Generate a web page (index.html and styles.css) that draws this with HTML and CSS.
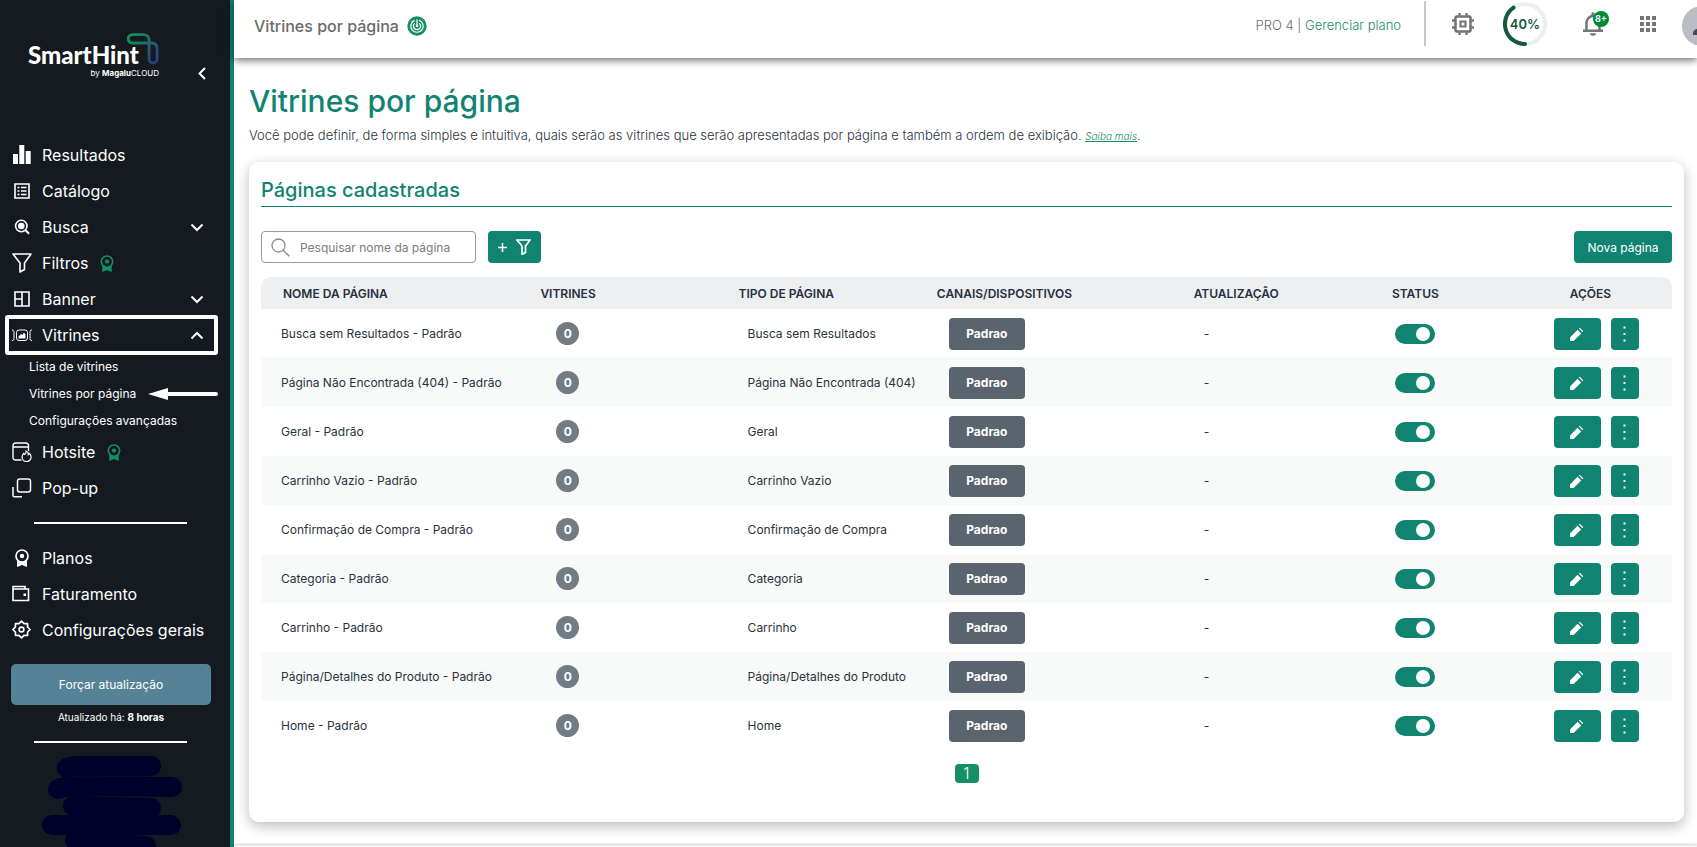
FILE: index.html
```html
<!DOCTYPE html>
<html lang="pt-BR">
<head>
<meta charset="utf-8">
<meta name="viewport" content="width=device-width, initial-scale=1">
<title>Vitrines por página</title>
<link rel="stylesheet" href="styles.css">
</head>
<body>
<svg class="sprite" aria-hidden="true">
  <symbol id="i-down" viewBox="0 0 14 9"><path d="M1.500 1.500 7 7l5.500-5.500" fill="none" stroke="currentColor" stroke-width="2"/></symbol>
  <symbol id="i-award" viewBox="0 0 14 18"><path d="M2 10v8l5-2 5 2v-8z" fill="currentColor"/><circle cx="7" cy="7" r="6" fill="#141a20" stroke="currentColor" stroke-width="1.700"/><circle cx="7" cy="7" r="2.200" fill="currentColor"/></symbol>
  <symbol id="i-funnel" viewBox="0 0 20 20"><path d="M1 1h18l-6.500 9v6.500L8 19v-9z" fill="none" stroke="currentColor" stroke-width="1.600" stroke-linejoin="round"/></symbol>
  <symbol id="i-pencil" viewBox="0 0 14 14"><path d="M0 14v-3.600l7.600-7.600 3.600 3.600L3.600 14zM8.800 1.600l.9-.9L13.300 4.300l-.9.9z" fill="currentColor"/></symbol>
  <symbol id="i-dots" viewBox="0 0 3 16"><path d="M.5 .5h2v2H.5zM.5 7h2v2H.5zM.5 13.500h2v2H.5z" fill="currentColor"/></symbol>
</svg>

<div class="app">
  <aside class="sidebar">
    <div class="brand">
      <div class="logo">
        <div class="logo-name">SmartHint</div>
        <div class="logo-by">by <b>Magalu</b>CLOUD</div>
        <svg class="logo-mark" viewBox="0 0 32 33" aria-hidden="true">
          <defs><linearGradient id="mark" x1="0" y1="0" x2="1" y2="1"><stop offset="0" stop-color="#12955e"/><stop offset=".45" stop-color="#1d6f68"/><stop offset="1" stop-color="#2b3a86"/></linearGradient></defs>
          <path d="M20 10H5.500a4.200 4.200 0 0 1 0-8.400h11c3.200 0 5.600 2 5.600 5v19.300a4 4 0 0 0 8 0V15.500c0-3.500-2.300-5.500-5.600-5.500z" fill="none" stroke="url(#mark)" stroke-width="2.800"/>
        </svg>
      </div>
      <button class="collapse" aria-label="Recolher menu"><svg width="8" height="13" viewBox="0 0 8 13"><path d="M7 1 1.500 6.500 7 12" fill="none" stroke="currentColor" stroke-width="2"/></svg></button>
    </div>

    <nav class="menu">
      <a href="#" class="item"><svg class="ico" viewBox="0 0 20 20"><path d="M1 9h5v10H1zM7.300 0h5v19h-5zM13.700 6h5v13h-5z" fill="currentColor"/></svg><span>Resultados</span></a>
      <a href="#" class="item"><svg class="ico" viewBox="0 0 20 20"><path d="M3 3h14v14H3z" fill="none" stroke="currentColor" stroke-width="1.600"/><path d="M5.500 6.500h2M9 6.500h5.500M5.500 10h2M9 10h5.500M5.500 13.500h2M9 13.500h5.500" stroke="currentColor" stroke-width="1.500"/></svg><span>Catálogo</span></a>
      <a href="#" class="item"><svg class="ico" viewBox="0 0 20 20"><circle cx="9.300" cy="9" r="5.700" fill="none" stroke="currentColor" stroke-width="1.600"/><circle cx="9.300" cy="9" r="3.300" fill="currentColor"/><path d="m13.500 13.200 3.600 3.600" stroke="currentColor" stroke-width="2"/></svg><span>Busca</span><svg class="chev"><use href="#i-down"/></svg></a>
      <a href="#" class="item"><svg class="ico"><use href="#i-funnel"/></svg><span>Filtros</span><svg class="award"><use href="#i-award"/></svg></a>
      <a href="#" class="item"><svg class="ico" viewBox="0 0 20 20"><path d="M3 3h14v14H3zM10 3v14M3 10h7" fill="none" stroke="currentColor" stroke-width="1.600"/></svg><span>Banner</span><svg class="chev"><use href="#i-down"/></svg></a>
      <a href="#" class="item current"><svg class="ico" viewBox="0 0 20 20"><path d="M0 5c1.500 0 2 .6 2 2v6.500c0 1.400-.5 2-2 2M20 5c-1.500 0-2 .6-2 2v6.500c0 1.400.5 2 2 2" fill="none" stroke="currentColor" stroke-width="1"/><rect x="4.500" y="5" width="11" height="10.500" rx="2.500" fill="none" stroke="currentColor"/><path d="M6.500 13.500v-2L9 9l1.500 1L12 7.500l1.500 2v4z" fill="currentColor"/></svg><span>Vitrines</span><svg class="chev up"><use href="#i-down"/></svg></a>
      <div class="sub">
        <a href="#">Lista de vitrines</a>
        <a href="#" class="pointed">Vitrines por página <svg width="70" height="12" viewBox="0 0 70 12" aria-hidden="true"><path d="M0 6 20 0v12z" fill="#fff"/><path d="M18 6h50" stroke="#fff" stroke-width="4" stroke-linecap="round"/></svg></a>
        <a href="#">Configurações avançadas</a>
      </div>
      <a href="#" class="item"><svg class="ico" viewBox="0 0 20 20"><path d="M9.500 18h-6A2.500 2.500 0 0 1 1 15.500v-12A2.500 2.500 0 0 1 3.500 1h10.500A2.500 2.500 0 0 1 16.500 3.500V9M1 5h15.500" fill="none" stroke="currentColor" stroke-width="1.400"/><path d="M14 9c.3 2-.6 3.200-1.600 3.400-.4-.3-.6-.6-.7-1-1 1-1.600 2.300-1.600 3.700a4.500 4.500 0 0 0 9 0c0-2.300-1.200-3.100-2-3.800-.3 1-.6 1.200-.8 1.300.2-1.600-.6-2.900-2.300-3.600z" fill="none" stroke="currentColor" stroke-width="1.200"/></svg><span>Hotsite</span><svg class="award"><use href="#i-award"/></svg></a>
      <a href="#" class="item"><svg class="ico" viewBox="0 0 20 20"><rect x="5.500" y="1" width="13" height="13" rx="2.200" fill="none" stroke="currentColor" stroke-width="1.500"/><path d="M1 9v8.500c0 .8.500 1.300 1.300 1.300H10" fill="none" stroke="currentColor" stroke-width="1.500"/></svg><span>Pop-up</span></a>
    </nav>
    <hr class="rule">
    <nav class="menu second">
      <a href="#" class="item"><svg class="ico plan"><use href="#i-award"/></svg><span>Planos</span></a>
      <a href="#" class="item"><svg class="ico" viewBox="0 0 20 20"><path d="M1 5h15.500v11.500H1zM1 5V2.500h12V5" fill="none" stroke="currentColor" stroke-width="1.600"/><path d="M11.500 9.500h2.500V12h-2.500z" fill="currentColor"/></svg><span>Faturamento</span></a>
      <a href="#" class="item"><svg class="ico" viewBox="0 0 20 20"><path d="M9.500 1.200 12 3.600l3.500-.1.100 3.500 2.500 2.500-2.500 2.500-.1 3.500-3.500-.1-2.500 2.500L7 15.400l-3.500.1L3.400 12 .9 9.500 3.400 7l.1-3.500 3.500.1z" fill="none" stroke="currentColor" stroke-width="1.700" stroke-linejoin="round"/><circle cx="9.500" cy="9.500" r="2.400" fill="none" stroke="currentColor" stroke-width="1.600"/></svg><span>Configurações gerais</span></a>
    </nav>
    <button class="force">Forçar atualização</button>
    <p class="updated">Atualizado há: <b>8 horas</b></p>
    <hr class="rule">
    <svg class="redacted" viewBox="0 0 230 100" aria-hidden="true"><g fill="none" stroke="#00002b" stroke-width="20" stroke-linecap="round"><path d="M67 20 75 18 151 18"/><path d="M58 41C66 37 90 38 172 39"/><path d="M73 58 151 60"/><path d="M52 77H171"/><path d="M75 92 146 98"/></g></svg>
  </aside>

  <div class="content">
    <header class="topbar">
      <span class="crumb">Vitrines por página</span>
      <svg class="radar" viewBox="0 0 20 20" aria-hidden="true"><circle cx="10" cy="10" r="9.700" fill="#158f63"/><path d="M10 3.500v6.500M12 4.200a6.200 6.200 0 1 1-4.500.2M12.200 7.200a3.600 3.600 0 1 1-4.400 0" fill="none" stroke="#fff" stroke-width="1.200"/><circle cx="10" cy="10" r="1.300" fill="#fff"/></svg>
      <div class="plan-info">PRO 4 | <a href="#">Gerenciar plano</a></div>
      <button class="tool chip" aria-label="Processamento"><svg width="24" height="24" viewBox="0 0 24 24"><path d="M5.500 4.500h13l1 1v13l-1 1h-13l-1-1v-13z" fill="none" stroke="currentColor" stroke-width="2.600"/><path d="M8.500 1v4M15.500 1v4M8.500 19v4M15.500 19v4M1 8.500h4M1 15.500h4M19 8.500h4M19 15.500h4" stroke="currentColor" stroke-width="2.400"/><path d="M9.500 9.500h5v5h-5z" fill="none" stroke="currentColor" stroke-width="2.200"/></svg></button>
      <div class="ring"><svg width="44" height="44" viewBox="0 0 44 44" aria-hidden="true"><circle cx="22" cy="22" r="20" fill="none" stroke="#e8f0ee" stroke-width="4"/><path d="M22 42A20 20 0 0 1 10.500 5.600" fill="none" stroke="#15593f" stroke-width="4" stroke-linecap="round"/></svg><span>40%</span></div>
      <button class="tool bell" aria-label="Notificações"><svg width="22" height="25" viewBox="0 0 22 25"><path d="M4.500 19.500V12a6.500 7 0 0 1 13 0v7.500" fill="none" stroke="currentColor" stroke-width="2.500"/><path d="M1 18.500h20V21H1zM8 22.300h6a3 2.500 0 0 1-6 0zM9.300 5V3a1.700 1.700 0 0 1 3.400 0v2z" fill="currentColor"/></svg><span class="count">8+</span></button>
      <button class="tool apps" aria-label="Aplicativos"><svg width="18" height="18" viewBox="0 0 18 18"><path d="M1 1h4v4H1zM7 1h4v4H7zM13 1h4v4h-4zM1 7h4v4H1zM7 7h4v4H7zM13 7h4v4h-4zM1 13h4v4H1zM7 13h4v4H7zM13 13h4v4h-4z" fill="currentColor"/></svg></button>
      <button class="avatar" aria-label="Conta"><svg width="40" height="40" viewBox="0 0 40 40"><circle cx="20" cy="20" r="20" fill="#b9bec6"/><circle cx="20" cy="14" r="5" fill="#474c52"/><path d="M11 29v-2c0-3.500 5-5 9-5s9 1.500 9 5v2z" fill="#474c52"/></svg></button>
    </header>

    <main class="page">
      <h1>Vitrines por página</h1>
      <p class="lead">Você pode definir, de forma simples e intuitiva, quais serão as vitrines que serão apresentadas por página e também a ordem de exibição. <a href="#">Saiba mais</a>.</p>

      <section class="card">
        <h2>Páginas cadastradas</h2>
        <div class="bar">
          <label class="search"><svg width="19" height="19" viewBox="0 0 19 19" aria-hidden="true"><circle cx="7.500" cy="7.500" r="6.500" fill="none" stroke="currentColor" stroke-width="1.300"/><path d="m12.200 12.200 6 6" stroke="currentColor" stroke-width="1.500"/></svg><input type="text" placeholder="Pesquisar nome da página" aria-label="Pesquisar nome da página"></label>
          <button class="btn filter" aria-label="Adicionar filtro"><svg width="9" height="9" viewBox="0 0 9 9"><path d="M4.500 0v9M0 4.500h9" stroke="currentColor" stroke-width="1.600"/></svg><svg width="15" height="16" viewBox="0 0 15 16"><path d="M1 1h13L9.500 7v6.500l-3.500 2V7z" fill="none" stroke="currentColor" stroke-width="1.700"/></svg></button>
          <button class="btn new">Nova página</button>
        </div>

        <table>
          <colgroup><col class="c-name"><col class="c-count"><col class="c-type"><col class="c-channel"><col class="c-date"><col class="c-status"><col class="c-actions"></colgroup>
          <thead><tr><th>NOME DA PÁGINA</th><th>VITRINES</th><th>TIPO DE PÁGINA</th><th>CANAIS/DISPOSITIVOS</th><th>ATUALIZAÇÃO</th><th>STATUS</th><th>AÇÕES</th></tr></thead>
          <tbody>
            <tr><td>Busca sem Resultados - Padrão</td><td><span class="num">0</span></td><td>Busca sem Resultados</td><td><button class="channel">Padrao</button></td><td>-</td><td><input type="checkbox" class="switch" aria-label="Status" checked></td><td><div class="acts"><button class="btn edit" aria-label="Editar"><svg><use href="#i-pencil"/></svg></button><button class="btn more" aria-label="Mais"><svg><use href="#i-dots"/></svg></button></div></td></tr>
            <tr><td>Página Não Encontrada (404) - Padrão</td><td><span class="num">0</span></td><td>Página Não Encontrada (404)</td><td><button class="channel">Padrao</button></td><td>-</td><td><input type="checkbox" class="switch" aria-label="Status" checked></td><td><div class="acts"><button class="btn edit" aria-label="Editar"><svg><use href="#i-pencil"/></svg></button><button class="btn more" aria-label="Mais"><svg><use href="#i-dots"/></svg></button></div></td></tr>
            <tr><td>Geral - Padrão</td><td><span class="num">0</span></td><td>Geral</td><td><button class="channel">Padrao</button></td><td>-</td><td><input type="checkbox" class="switch" aria-label="Status" checked></td><td><div class="acts"><button class="btn edit" aria-label="Editar"><svg><use href="#i-pencil"/></svg></button><button class="btn more" aria-label="Mais"><svg><use href="#i-dots"/></svg></button></div></td></tr>
            <tr><td>Carrinho Vazio - Padrão</td><td><span class="num">0</span></td><td>Carrinho Vazio</td><td><button class="channel">Padrao</button></td><td>-</td><td><input type="checkbox" class="switch" aria-label="Status" checked></td><td><div class="acts"><button class="btn edit" aria-label="Editar"><svg><use href="#i-pencil"/></svg></button><button class="btn more" aria-label="Mais"><svg><use href="#i-dots"/></svg></button></div></td></tr>
            <tr><td>Confirmação de Compra - Padrão</td><td><span class="num">0</span></td><td>Confirmação de Compra</td><td><button class="channel">Padrao</button></td><td>-</td><td><input type="checkbox" class="switch" aria-label="Status" checked></td><td><div class="acts"><button class="btn edit" aria-label="Editar"><svg><use href="#i-pencil"/></svg></button><button class="btn more" aria-label="Mais"><svg><use href="#i-dots"/></svg></button></div></td></tr>
            <tr><td>Categoria - Padrão</td><td><span class="num">0</span></td><td>Categoria</td><td><button class="channel">Padrao</button></td><td>-</td><td><input type="checkbox" class="switch" aria-label="Status" checked></td><td><div class="acts"><button class="btn edit" aria-label="Editar"><svg><use href="#i-pencil"/></svg></button><button class="btn more" aria-label="Mais"><svg><use href="#i-dots"/></svg></button></div></td></tr>
            <tr><td>Carrinho - Padrão</td><td><span class="num">0</span></td><td>Carrinho</td><td><button class="channel">Padrao</button></td><td>-</td><td><input type="checkbox" class="switch" aria-label="Status" checked></td><td><div class="acts"><button class="btn edit" aria-label="Editar"><svg><use href="#i-pencil"/></svg></button><button class="btn more" aria-label="Mais"><svg><use href="#i-dots"/></svg></button></div></td></tr>
            <tr><td>Página/Detalhes do Produto - Padrão</td><td><span class="num">0</span></td><td>Página/Detalhes do Produto</td><td><button class="channel">Padrao</button></td><td>-</td><td><input type="checkbox" class="switch" aria-label="Status" checked></td><td><div class="acts"><button class="btn edit" aria-label="Editar"><svg><use href="#i-pencil"/></svg></button><button class="btn more" aria-label="Mais"><svg><use href="#i-dots"/></svg></button></div></td></tr>
            <tr><td>Home - Padrão</td><td><span class="num">0</span></td><td>Home</td><td><button class="channel">Padrao</button></td><td>-</td><td><input type="checkbox" class="switch" aria-label="Status" checked></td><td><div class="acts"><button class="btn edit" aria-label="Editar"><svg><use href="#i-pencil"/></svg></button><button class="btn more" aria-label="Mais"><svg><use href="#i-dots"/></svg></button></div></td></tr>
          </tbody>
        </table>
        <div class="pager"><button class="page-no">1</button></div>
      </section>
    </main>
    <footer class="footer"></footer>
  </div>
</div>
</body>
</html>
```
FILE: styles.css
```css
* { box-sizing: border-box; }
body { margin: 0; font-family: Inter, "Open Sans", sans-serif; font-size: 13px; color: #2a323c; background: #fff; }
button, input { font: inherit; }
button { border: 0; padding: 0; cursor: pointer; background: none; color: inherit; }
a { color: inherit; text-decoration: none; }
svg { display: block; flex: none; }
.sprite { display: none; }

.app { display: flex; height: 100vh; overflow: hidden; }

/* Sidebar */
.sidebar { flex: none; width: 234px; overflow: hidden; background: #141a20; border-right: 4px solid #118371; color: #fff; }
.brand { display: flex; justify-content: space-between; height: 137px; padding: 33px 22px 0 28px; }
.logo { position: relative; width: 131px; height: 46px; padding-top: 8px; }
.logo-name { font-family: Lato, sans-serif; font-weight: 900; font-size: 24px; line-height: 28px; }
.logo-by { font-size: 8px; line-height: 8px; text-align: right; }
.logo-mark { position: absolute; top: 0; right: 0; width: 32px; height: 33px; }
.collapse { width: 10px; height: 13px; margin-top: 34px; }

.item { display: flex; align-items: center; height: 36px; padding: 0 26px 0 12px; font-size: 16px; white-space: nowrap; }
.ico { width: 20px; height: 20px; margin-right: 10px; }
.ico.plan { height: 18px; }
.chev { width: 14px; height: 9px; margin-left: auto; }
.chev.up { transform: rotate(180deg); }
.award { width: 14px; height: 17px; margin-left: 12px; color: #158f63; }
.current { position: relative; }
.current::after { content: ""; position: absolute; inset: -2px 12px -2px 5px; border: 4px solid #fff; border-radius: 3px; }
.sub { display: flex; flex-direction: column; padding-left: 29px; font-size: 12px; }
.sub a { display: flex; align-items: center; height: 27px; }
.pointed svg { margin: 0 12px 0 auto; }
.rule { width: 153px; height: 2px; margin: 16px auto 0 34px; border: 0; background: #fff; }
.second { padding-top: 16px; }
.force { display: block; width: 200px; height: 41px; margin: 16px 0 0 11px; border-radius: 5px; background: #548396; font-size: 12px; }
.updated { margin: 4px 0 0; padding-right: 8px; text-align: center; font-size: 10px; line-height: 16px; }
.redacted { width: 100%; height: 100px; margin-top: 5px; }

/* Top bar */
.content { flex: 1; min-width: 0; display: flex; flex-direction: column; }
.topbar { position: relative; display: flex; align-items: flex-start; height: 58px; padding-left: 20px; overflow: clip; overflow-clip-margin: 10px; box-shadow: 0 2px 8px rgba(0, 0, 0, .6); color: #6b6b6b; }
.crumb { margin-top: 16px; font-size: 16px; line-height: 20px; font-weight: 500; }
.radar { width: 20px; height: 20px; margin: 16px 0 0 8px; }
.plan-info { height: 45px; margin: 1px 25px 0 auto; padding-right: 23px; border-right: 2px solid #c4c8cb; font-weight: 300; line-height: 49px; }
.plan-info a { color: #158f63; }
.tool { color: #757575; }
.chip { margin-top: 12px; }
.ring { position: relative; display: flex; margin: 2px 35px 0 28px; }
.ring span { position: absolute; inset: 0; line-height: 44px; text-align: center; font-weight: 600; color: #15593f; }
.bell { position: relative; margin: 11px 35px 0 0; }
.count { position: absolute; top: 0; left: 11px; width: 16px; height: 16px; border-radius: 50%; background: #008a34; color: #fff; font-size: 9px; line-height: 16px; font-weight: 700; text-align: center; }
.apps { margin: 15px 25px 0 0; }
.avatar { flex: none; margin: 6px -25px 0 0; }

/* Page */
.page { flex: 1; padding: 0 13px 23px 15px; display: flex; flex-direction: column; }
h1 { margin: 24px 0 0; font-size: 30px; line-height: 38px; font-weight: 500; color: #118371; }
.lead { margin: 6px 0 16px; font-weight: 300; line-height: 19px; }
.lead a { color: #158f63; font-size: 10px; font-style: italic; text-decoration: underline; }
.card { flex: 1; padding: 16px 12px 0; border-radius: 10px; box-shadow: 0 4px 14px rgba(0, 0, 0, .28); }
h2 { margin: 0; padding-bottom: 4px; border-bottom: 1px solid #118371; font-size: 20px; line-height: 24px; font-weight: 500; color: #118371; }
.bar { display: flex; gap: 12px; margin: 24px 0 14px; }
.btn { display: flex; align-items: center; justify-content: center; height: 32px; border-radius: 4px; background: #118371; color: #fff; }
.search { display: flex; align-items: center; gap: 10px; width: 215px; height: 32px; padding: 0 9px; border: 1px solid #9a9a9a; border-radius: 4px; color: #8a8a8a; }
.search input { flex: 1; min-width: 0; padding: 0; border: 0; outline: 0; background: none; font-size: 12px; }
.search input::placeholder { color: #7c7c7c; }
.filter { width: 53px; gap: 9px; }
.new { margin-left: auto; width: 98px; font-size: 12px; }

table { width: 100%; table-layout: fixed; border-collapse: separate; border-spacing: 0; }
.c-name { width: 19.8%; }
.c-count, .c-type, .c-date { width: 14.05%; }
.c-channel { width: 18.2%; }
.c-status { width: 11.4%; }
th { height: 32px; padding: 0; background: #edeff1; text-align: left; font-size: 12px; font-weight: 600; white-space: nowrap; color: #26303f; }
th:first-child { padding-left: 22px; border-radius: 10px 0 0; }
th:last-child { padding-left: 17px; border-radius: 0 10px 0 0; }
td { height: 49px; padding: 0; font-size: 12px; white-space: nowrap; }
tbody tr:nth-child(even) { background: #f7faf9; }
td:nth-child(1) { padding-left: 20px; }
td:nth-child(2) { padding-left: 16px; }
td:nth-child(3) { padding-left: 9px; }
td:nth-child(4) { padding-left: 12px; }
td:nth-child(5) { padding-left: 10px; }
td:nth-child(6) { padding-left: 3px; }
td:nth-child(7) { padding-left: 1px; }
.num { display: block; width: 23px; height: 23px; border-radius: 50%; background: #727c84; color: #fff; font-size: 12px; font-weight: 700; line-height: 23px; text-align: center; }
.channel { display: block; width: 76px; height: 32px; border-radius: 4px; background: #59646e; color: #fff; font-weight: 700; }
.switch { appearance: none; display: block; width: 40px; height: 20px; margin: 0; padding: 3px 5px; border-radius: 10px; background: #118371; }
.switch::before { content: ""; display: block; width: 14px; height: 14px; margin-left: auto; border-radius: 50%; background: #fff; }
.acts { display: flex; gap: 10px; }
.edit { width: 47px; }
.edit svg { width: 14px; height: 14px; }
.more { width: 28px; }
.more svg { width: 3px; height: 16px; }
.pager { display: flex; justify-content: center; padding-top: 14px; }
.page-no { width: 24px; height: 19px; border-radius: 4px; background: #158f63; color: #fff; font-size: 16px; font-weight: 300; line-height: 19px; }
.footer { height: 2px; background: #f0f0f0; box-shadow: 0 0 3px rgba(0, 0, 0, .4); }
```
